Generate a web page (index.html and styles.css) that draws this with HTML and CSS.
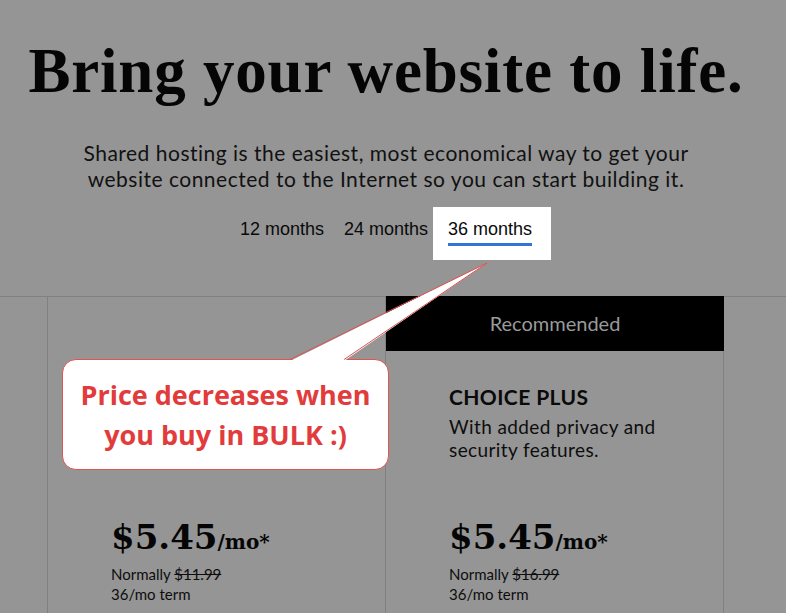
FILE: index.html
```html
<!DOCTYPE html>
<html lang="en">
<head>
<meta charset="utf-8">
<title>Shared hosting</title>
<link rel="stylesheet" href="styles.css">
</head>
<body>
<div class="page">
  <section class="hero">
    <h1 class="hero-title">Bring your website to life.</h1>
    <p class="hero-sub">Shared hosting is the easiest, most economical way to get your<br>website connected to the Internet so you can start building it.</p>
    <div class="terms">
      <span class="term"><span class="term-label">12 months</span></span>
      <span class="term"><span class="term-label">24 months</span></span>
      <span class="term term-active"><span class="term-label">36 months</span></span>
    </div>
  </section>

  <section class="plans">
    <div class="plan plan-edge"></div>
    <div class="plan">
      <div class="plan-head"></div>
      <div class="plan-body">
        <div class="plan-intro"></div>
        <div class="price"><span class="price-num">$5.45</span><span class="price-unit">/mo*</span></div>
        <p class="price-note">Normally <s>$11.99</s><br>36/mo term</p>
      </div>
    </div>
    <div class="plan">
      <div class="plan-head plan-head-rec">Recommended</div>
      <div class="plan-body">
        <div class="plan-intro">
          <h2 class="plan-name">CHOICE PLUS</h2>
          <p class="plan-desc">With added privacy and<br>security features.</p>
        </div>
        <div class="price"><span class="price-num">$5.45</span><span class="price-unit">/mo*</span></div>
        <p class="price-note">Normally <s>$16.99</s><br>36/mo term</p>
      </div>
    </div>
    <div class="plan plan-rest"></div>
  </section>

  <div class="callout">
    <p class="callout-text">Price decreases when<br>you buy in BULK :)</p>
  </div>
  <svg class="callout-tail" width="220" height="110" viewBox="0 0 220 110">
    <polygon points="10,106 207,8 64,106" fill="#ffffff"/>
    <polyline points="10,104.5 207,8 64,104.5" fill="none" stroke="#e2524f" stroke-width="1"/>
  </svg>
</div>
</body>
</html>
```
FILE: styles.css
```css
* { box-sizing: border-box; }

html, body {
  margin: 0;
  padding: 0;
  background: #959595;
}

body {
  font-family: Lato, "Open Sans", sans-serif;
  color: #0d0d0d;
  overflow: hidden;
}

.page {
  position: relative;
  width: 786px;
  height: 613px;
}

.hero {
  width: 772px;
  padding-top: 40px;
  text-align: center;
}

.hero-title {
  margin: 0;
  font-family: "Liberation Serif", "Times New Roman", serif;
  font-weight: 700;
  font-size: 63px;
  line-height: 63px;
  letter-spacing: 0.8px;
  color: #050505;
}

.hero-sub {
  margin: 37px 0 0;
  font-size: 21px;
  line-height: 26px;
  letter-spacing: 0.5px;
  color: #111;
}

.terms {
  margin-top: 27px;
  display: flex;
  justify-content: center;
  gap: 20px;
  font-family: "Liberation Sans", Arial, sans-serif;
  font-size: 18px;
  line-height: 20px;
  color: #0a0a0a;
}

.term-label {
  display: block;
  padding-bottom: 4px;
  border-bottom: 3px solid transparent;
}

.term-active {
  margin: -12px -19px -14px -15px;
  padding: 12px 19px 14px 15px;
  background: #ffffff;
}

.term-active .term-label {
  border-bottom-color: #3474d4;
}

.plans {
  margin-top: 50px;
  display: grid;
  grid-template-columns: 48px 338px 338px 1fr;
  border-top: 1px solid #808080;
  height: 330px;
}

.plan {
  border-right: 1px solid #808080;
}

.plan-rest { border-right: 0; }

.plan-head {
  height: 54px;
}

.plan-head-rec {
  margin-top: -1px;
  margin-right: -1px;
  height: 55px;
  background: #000;
  color: #9a9a9a;
  font-size: 20px;
  line-height: 55px;
  text-align: center;
}

.plan-body {
  padding: 34px 0 0 63px;
}

.plan-intro {
  height: 76px;
}

.plan-name {
  margin: 0;
  font-size: 21px;
  line-height: 24px;
  letter-spacing: 0.4px;
  font-weight: 700;
  color: #0a0a0a;
}

.plan-desc {
  margin: 6px 0 0;
  font-size: 19px;
  line-height: 23px;
  letter-spacing: 0.4px;
  color: #0d0d0d;
}

.price {
  margin-top: 56px;
  font-family: "DejaVu Serif", serif;
  font-weight: 700;
  line-height: 40px;
  color: #050505;
}

.price-num { font-size: 34px; }
.price-unit { font-size: 20px; }

.price-note {
  margin: 0;
  font-size: 15px;
  line-height: 20px;
  color: #0d0d0d;
}

.callout {
  position: absolute;
  left: 62px;
  top: 359px;
  width: 327px;
  height: 111px;
  background: #ffffff;
  border: 1px solid #e2524f;
  border-radius: 14px;
  display: flex;
  align-items: center;
  justify-content: center;
}

.callout-text {
  margin: 0;
  font-family: "Open Sans", sans-serif;
  font-weight: 700;
  font-size: 27px;
  line-height: 40px;
  text-align: center;
  color: #e23b3b;
}

.callout-tail {
  position: absolute;
  left: 280px;
  top: 255px;
}
```
